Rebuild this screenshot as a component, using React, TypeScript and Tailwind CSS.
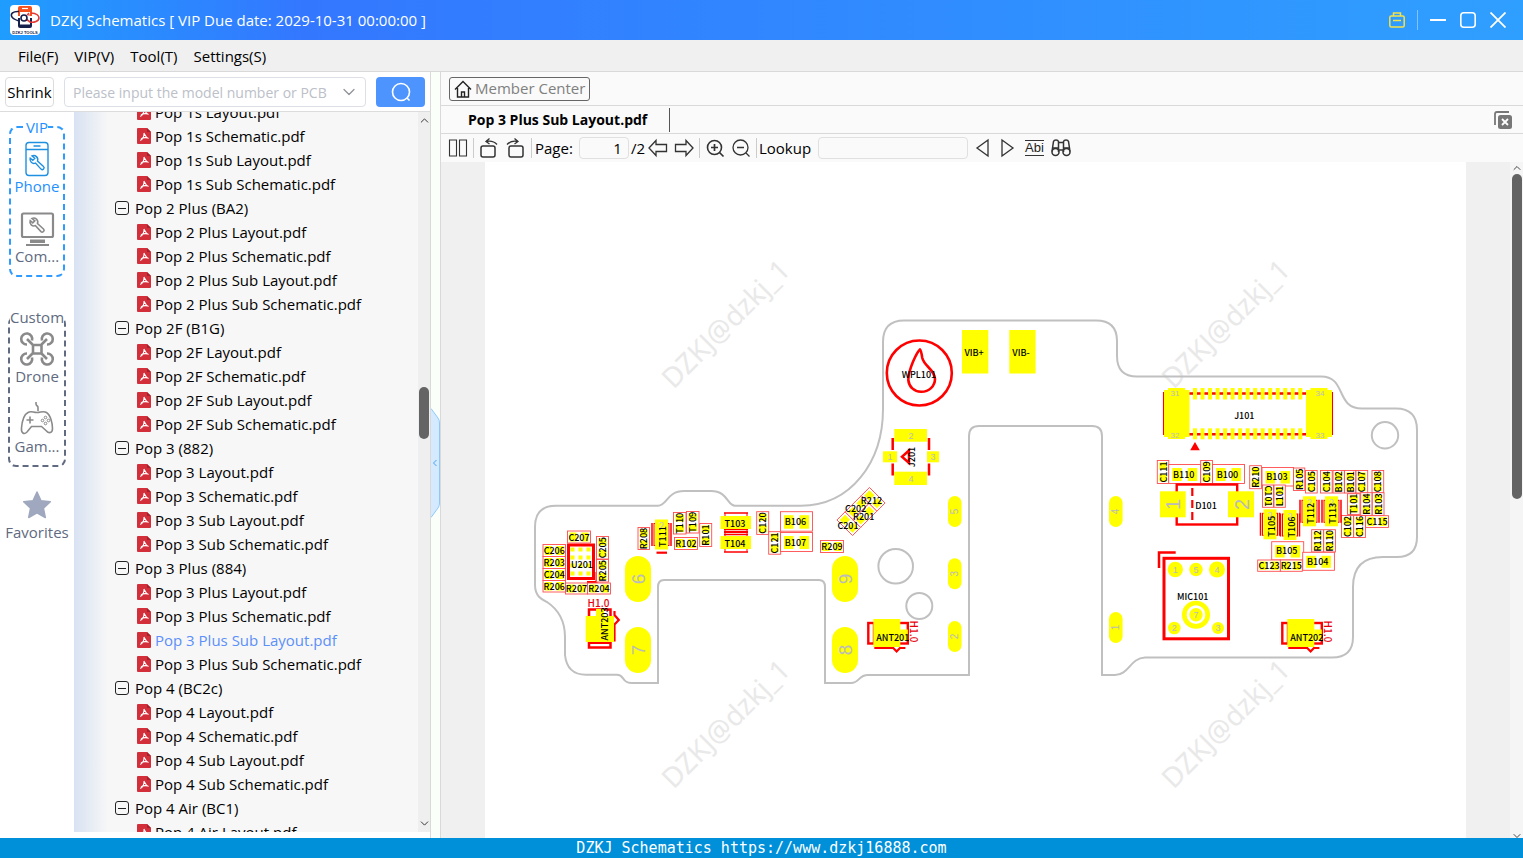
import React, { useState } from 'react';
import { ChevronDown, ChevronUp } from 'lucide-react';

type Group = { name: string; files: string[] };
type PartProps = { x: number; y: number; w: number; h: number; name: string; turn?: number };

const kinds = ['Layout', 'Schematic', 'Sub Layout', 'Sub Schematic'];

const groups: Group[] = [
  { name: 'Pop 2 Plus (BA2)', files: kinds.map((k) => `Pop 2 Plus ${k}.pdf`) },
  { name: 'Pop 2F (B1G)', files: kinds.map((k) => `Pop 2F ${k}.pdf`) },
  { name: 'Pop 3 (882)', files: kinds.map((k) => `Pop 3 ${k}.pdf`) },
  { name: 'Pop 3 Plus (884)', files: kinds.map((k) => `Pop 3 Plus ${k}.pdf`) },
  { name: 'Pop 4 (BC2c)', files: kinds.map((k) => `Pop 4 ${k}.pdf`) },
  { name: 'Pop 4 Air (BC1)', files: ['Pop 4 Air Layout.pdf'] },
];

// small two-pad parts: x, y, width, height, name, text rotation
const parts: [number, number, number, number, string, number?][] = [
  [567.5, 531, 23, 12, 'C207'],
  [543, 544.5, 22.5, 12, 'C206'],
  [543, 556.5, 22.5, 12, 'R203'],
  [543, 568.5, 22.5, 12, 'C204'],
  [543, 580.5, 22.5, 11.5, 'R206'],
  [596.5, 536.5, 12, 22.5, 'C205', -90],
  [596.5, 559.5, 12, 22.5, 'R205', -90],
  [565.5, 583, 22, 11, 'R207'],
  [587.5, 583, 23, 11, 'R204'],
  [638, 527.5, 11.5, 22, 'R208', -90],
  [673.5, 512.5, 12.5, 21.5, 'T110', -90],
  [686.5, 511.5, 12.5, 21.5, 'T109', -90],
  [674.5, 537.5, 23, 12, 'R102'],
  [699.7, 523.5, 12, 23, 'R101', -90],
  [756.7, 511.7, 12, 22.7, 'C120', -90],
  [768.7, 531.7, 12, 22.5, 'C121', -90],
  [780.5, 511.7, 32, 19.5, 'B106'],
  [780.5, 532.5, 32, 19, 'B107'],
  [820.5, 540.5, 23, 12, 'R209'],
  [1157.3, 460.5, 11.5, 23, 'C111', -90],
  [1168.7, 464.5, 32, 19, 'B110'],
  [1200.7, 460.5, 11.7, 23, 'C109', -90],
  [1212.5, 464.5, 32, 19, 'B100'],
  [1249.7, 465.7, 11.7, 23, 'R210', -90],
  [1262, 467.5, 31.5, 18.5, 'B103'],
  [1293.5, 468, 11.3, 22.5, 'R105', -90],
  [1305.5, 470.5, 11.7, 22.5, 'C105', -90],
  [1320.5, 470.5, 11.7, 22.5, 'C104', -90],
  [1333, 470.5, 11.3, 22.5, 'B102', -90],
  [1344.5, 470.5, 11.3, 22.5, 'B101', -90],
  [1356, 470.5, 11.7, 22.5, 'C107', -90],
  [1372, 470.5, 11.7, 22.5, 'C108', -90],
  [1262.5, 485, 11, 22.3, 'C101', 90],
  [1274, 485, 11.3, 22.3, 'L101', -90],
  [1347.5, 493.7, 12.5, 20.7, 'T101', -90],
  [1360.7, 492.7, 11.3, 22.7, 'R104', -90],
  [1372.3, 492.7, 11.7, 22.7, 'R103', -90],
  [1341.5, 515.5, 12, 22, 'C102', -90],
  [1353.7, 515.5, 11.7, 22, 'C116', -90],
  [1365.5, 515.7, 23, 11.7, 'C115'],
  [1311.7, 529.7, 11.7, 22.3, 'R112', -90],
  [1323.7, 529.7, 11.7, 22.3, 'R110', -90],
  [1271.7, 541.7, 32, 18.3, 'B105'],
  [1302.7, 552.3, 31.7, 18, 'B104'],
  [1257.7, 560, 22.7, 11.3, 'C123'],
  [1280.3, 560, 22, 11.3, 'R215'],
];

const diodes: [number, number, string][] = [
  [655, 519.5, 'T111'],
  [1263.5, 509.3, 'T105'],
  [1283.5, 510, 'T106'],
  [1303, 496.3, 'T112'],
  [1325, 496.3, 'T113'],
];

// spring contacts: x, y, width, height, pin
const contacts: [number, number, number, number, string][] = [
  [625, 556, 26, 46, '6'],
  [625, 627, 26, 46, '7'],
  [832, 556, 26, 46, '9'],
  [832, 627, 26, 46, '8'],
  [948, 496, 13.6, 31, '5'],
  [948, 558.3, 13.6, 31, '3'],
  [948, 621, 13.6, 31, '2'],
  [1109, 496, 13.6, 31, '4'],
  [1109, 612, 13.6, 31, '1'],
];

function Label({ x, y, turn = 0, className = 'fill-black text-[9px]', children }: { x: number; y: number; turn?: number; className?: string; children: React.ReactNode }) {
  return (
    <text
      textAnchor="middle"
      dominantBaseline="central"
      transform={`translate(${x} ${y}) rotate(${turn})`}
      className={className}
    >
      {children}
    </text>
  );
}

function Part({ x, y, w, h, name, turn = 0 }: PartProps) {
  const tall = h > w;
  const big = w > 30;
  const inset = big ? 3.5 : 2;
  const pad = big ? 9.5 : 7;
  return (
    <g>
      <rect x={x} y={y} width={w} height={h} fill="#fff" stroke="#ff4d4d" strokeWidth="0.9" />
      {tall ? (
        <>
          <rect x={x + 2} y={y + 2} width={w - 4} height={pad} fill="#ff0" />
          <rect x={x + 2} y={y + h - 2 - pad} width={w - 4} height={pad} fill="#ff0" />
        </>
      ) : (
        <>
          <rect x={x + inset} y={y + inset - (big ? 0 : 0.5)} width={pad} height={h - inset * 2 + 1} fill="#ff0" />
          <rect x={x + w - inset - pad} y={y + inset - (big ? 0 : 0.5)} width={pad} height={h - inset * 2 + 1} fill="#ff0" />
        </>
      )}
      <Label x={big ? x + 15 : x + w / 2} y={y + h / 2} turn={turn}>{name}</Label>
    </g>
  );
}

function Antenna({ x, name }: { x: number; name: string }) {
  return (
    <g transform={`translate(${x} 619)`}>
      <rect x="1" y="4" width="39.5" height="20.5" fill="#fff" stroke="red" strokeWidth="2.4" />
      <path d="M6.5 4v20" stroke="red" strokeWidth="2" />
      <rect x="6" y="0" width="27" height="28" fill="#ff0" />
      <rect x="33" y="10.5" width="7.5" height="11" fill="#ff0" />
      <path d="M7 29h19l3.3 3.5 3.3-3.5h5.5" fill="none" stroke="red" strokeWidth="2.2" />
      <Label x={25.5} y={18}>{name}</Label>
      <Label x={47} y={12.5} turn={90} className="fill-red-600 text-[10px]">H1.0</Label>
    </g>
  );
}

function Board() {
  return (
    <svg viewBox="485 162 981 676" preserveAspectRatio="xMidYMin meet" className="block w-full font-['Noto_Sans_CJK_SC','Liberation_Sans',sans-serif] font-medium">
      <g className="font-['Noto_Sans','Liberation_Sans',sans-serif] font-normal">
        {[[725, 323], [1225, 323], [725, 723], [1225, 723]].map(([x, y]) => (
          <Label key={`${x}-${y}`} x={x} y={y} turn={-45} className="fill-[#e9e9e9] text-[28px]">DZKJ@dzkj_1</Label>
        ))}
      </g>

      <path
        fill="none"
        stroke="#c0c0c0"
        strokeWidth="2"
        d="M658 683V587Q658 580 664 580H819Q825 580 825 587V683H851C860 683 858 675 868 675H969V436Q969 426 979 426H1092Q1102 426 1102 436V675H1115C1129 675 1130 658 1145 657.5H1332Q1353 657.5 1353 637V587Q1353 557 1383 557H1397Q1417 557 1417 537V430Q1417 408.500 1396 408.500H1362C1335 408.500 1347 376.500 1321 376.500H1137Q1117 376.500 1117 356V341Q1117 320.500 1096 320.500H904Q883 320.500 883 342V409C883 462 851 505.700 801 505.700H735C727 505.700 728 491 711 491H684C667 491 667 505.700 658 505.700H556Q535 505.700 535 527V585C535 597 543 600 547 602Q565 614 565 637V655Q567 674.700 586 674.700H617C625 674.700 621 683 632 683Z"
      />
      <g fill="none" stroke="#c0c0c0" strokeWidth="2">
        <circle cx="895.700" cy="566.300" r="17.300" />
        <circle cx="919.300" cy="606" r="13" />
        <circle cx="1385" cy="435.300" r="13.200" />
      </g>

      {contacts.map(([x, y, w, h, pin]) => (
        <g key={pin + x}>
          <rect x={x} y={y} width={w} height={h} rx={w / 2} fill="#ff0" />
          <Label x={x + w / 2} y={y + h / 2} turn={-90} className={w > 20 ? "fill-[#bbb] font-['Liberation_Sans'] font-normal text-[19px]" : "fill-[#bbb] font-['Liberation_Sans'] font-normal text-[10px]"}>{pin}</Label>
        </g>
      ))}

      <rect x="962" y="330" width="26.300" height="43.500" fill="#ff0" />
      <rect x="1009.300" y="330" width="26.300" height="43.500" fill="#ff0" />
      <Label x={974} y={352}>VIB+</Label>
      <Label x={1021} y={352}>VIB-</Label>

      <g fill="none" stroke="red" strokeWidth="2.600">
        <circle cx="919.300" cy="373" r="32.500" />
        <path d="M920 349.500C917 352 908.500 369 908.300 380C909 387 914 391.500 921 391.800C929 392 935 386 935 379C935 370 924 366 922.300 358Q921 350 920 349.500Z" />
      </g>
      <Label x={919} y={374}>WPL101</Label>

      {/* J201 */}
      <g fill="none" stroke="red" strokeWidth="2.500">
        <path d="M892.700 438v37.500M929 438v37.500" strokeDasharray="12 13.500" />
        <path d="M909 450.500l-7 6.200 7 6.200z" />
      </g>
      <g fill="#ff0">
        <rect x="894.300" y="429" width="32.700" height="12.700" />
        <rect x="894.300" y="471.700" width="32.700" height="13.300" />
        <rect x="883" y="451.300" width="14" height="11" />
        <rect x="927" y="451.300" width="12" height="11" />
      </g>
      {[['2', 911, 436], ['4', 911, 478.5], ['1', 890, 457], ['3', 933, 457]].map(([t, x, y]) => (
        <Label key={t} x={Number(x)} y={Number(y)} className="fill-[#bbb] font-['Liberation_Sans'] font-normal text-[9px]">{t}</Label>
      ))}
      <Label x={911.7} y={457} turn={-90}>J201</Label>

      {/* diagonal cluster */}
      <g transform="translate(861 511.500) rotate(-45)">
        <g fill="#fff" stroke="#ff4d4d" strokeWidth="0.900">
          <rect x="-23" y="-11" width="11.500" height="22" />
          <rect x="-11.500" y="-11" width="23" height="11" />
          <rect x="-11.500" y="0" width="23" height="11" />
          <rect x="11.500" y="-11" width="11.500" height="22" />
        </g>
        <g fill="#ff0">
          <rect x="-21" y="-9" width="7.500" height="7" />
          <rect x="-21" y="2" width="7.500" height="7" />
          <rect x="-9.500" y="-9" width="7" height="7" />
          <rect x="2.500" y="-9" width="7" height="7" />
          <rect x="-9.500" y="2" width="7" height="7" />
          <rect x="2.500" y="2" width="7" height="7" />
          <rect x="13.500" y="-9" width="7.500" height="7" />
          <rect x="13.500" y="2" width="7.500" height="7" />
        </g>
      </g>
      <Label x={871.5} y={500}>R212</Label>
      <Label x={855.7} y={508}>C202</Label>
      <Label x={863.7} y={516}>R201</Label>
      <Label x={848} y={525}>C201</Label>

      {/* U201 */}
      <rect x="568.500" y="545" width="25" height="33.500" fill="#fff" stroke="red" strokeWidth="3" />
      <path d="M596.500 572v10H587" fill="none" stroke="red" strokeWidth="2" />
      {[549, 557, 565, 573].map((y) =>
        [572, 580, 588].map((x) => <rect key={`${x}${y}`} x={x - 1.5} y={y - 1.5} width="4" height="4" fill="#ff0" />)
      )}
      <Label x={582} y={564.5}>U201</Label>

      {parts.map(([x, y, w, h, name, turn]) => (
        <Part key={name} x={x} y={y} w={w} h={h} name={name} turn={turn} />
      ))}

      {diodes.map(([x, y, name]) => (
        <g key={name}>
          <path d={`M${x - 3} ${y + 3.5}v23M${x + 16} ${y + 3.5}v23`} stroke="red" strokeWidth="1.500" />
          <rect x={x - 1} y={y + 4} width="15" height="22" fill="#fff" stroke="red" strokeWidth="1" />
          <rect x={x} y={y} width="13" height="30" fill="#ff0" />
          <Label x={x + 6.5} y={y + 6} className="fill-[#ccc] text-[9px]">2</Label>
          <Label x={x + 7.5} y={y + 17} turn={-90}>{name}</Label>
        </g>
      ))}
      <path d="M656.500 552.700h10.500" stroke="red" strokeWidth="2.200" />

      <g stroke="red" fill="none">
        <path d="M724 513h24M724 529.500h24M724 534.500h24M724 552h24" strokeWidth="1.500" />
        <path d="M724 532h24" strokeWidth="2" />
        <path d="M725 513v39M747 513v39" />
      </g>
      <rect x="720.500" y="516" width="30.500" height="13" fill="#ff0" />
      <rect x="720.500" y="536" width="30.500" height="13" fill="#ff0" />
      <Label x={735} y={523}>T103</Label>
      <Label x={735} y={543}>T104</Label>

      {/* ANT203 */}
      <rect x="589" y="609.500" width="21.500" height="38" fill="#fff" stroke="red" strokeWidth="2.500" />
      <path d="M589 643h21M614.500 611v4l4.300 5-4.300 4.500v17" fill="none" stroke="red" strokeWidth="2.200" />
      <rect x="585.700" y="616" width="28.300" height="26" fill="#ff0" />
      <rect x="596" y="609" width="8" height="8" fill="#ff0" />
      <Label x={604} y={624} turn={-90}>ANT203</Label>
      <Label x={598.5} y={602} className="fill-red-600 text-[10px]">H1.0</Label>

      <Antenna x={867.3} name="ANT201" />
      <Antenna x={1281.3} name="ANT202" />

      {/* J101 */}
      <path d="M1163.700 392v43M1332.300 392v43" stroke="red" strokeWidth="1.500" />
      <path d="M1189 393.500h117M1189 434.300h117" stroke="red" strokeWidth="2.600" />
      <g fill="#ff0">
        <path d="M1164 390h4v-2h17v2h4.500v47h-4.500v2h-17v-2h-4zM1306 390h4.500v-2h17v2h4.500v47h-4.500v2h-17v-2h-4.500z" />
        {Array.from({ length: 15 }, (_, i) => (
          <React.Fragment key={i}>
            <rect x={1193 + i * 7.52} y="388" width="4" height="11.500" />
            <rect x={1193 + i * 7.52} y="428.300" width="4" height="11" />
          </React.Fragment>
        ))}
      </g>
      {[['31', 1175, 393.5], ['32', 1175, 435], ['34', 1320, 393.5], ['33', 1320, 435]].map(([t, x, y]) => (
        <Label key={t} x={Number(x)} y={Number(y)} className="fill-[#bbb] font-['Liberation_Sans'] font-normal text-[8px]">{t}</Label>
      ))}
      <Label x={1244.3} y={415.7}>J101</Label>
      <path d="M1195 443.500l-3.500 6h7z" fill="red" stroke="red" strokeWidth="1.500" />

      {/* D101 */}
      <rect x="1176.700" y="484.500" width="60.500" height="40" fill="none" stroke="red" strokeWidth="2.400" />
      <path d="M1192.300 488v32.500" stroke="red" strokeWidth="2.200" strokeDasharray="8 4" />
      <rect x="1160" y="491.300" width="25.700" height="26" fill="#ff0" />
      <rect x="1228" y="491.300" width="26" height="26" fill="#ff0" />
      <Label x={1172.5} y={504.5} turn={-90} className="fill-[#bbb] font-['Liberation_Sans'] font-normal text-[20px]">1</Label>
      <Label x={1242} y={504.5} turn={-90} className="fill-[#bbb] font-['Liberation_Sans'] font-normal text-[20px]">2</Label>
      <Label x={1206} y={505}>D101</Label>

      {/* MIC101 */}
      <rect x="1164" y="558.300" width="64.500" height="80.500" fill="none" stroke="red" strokeWidth="3" />
      <path d="M1175.700 552.500H1159V568" fill="none" stroke="red" strokeWidth="2.500" />
      <circle cx="1196" cy="614.700" r="11.700" fill="#fff" stroke="#ff0" strokeWidth="4.700" />
      {[['1', 1175.3, 569.5, 7.7], ['5', 1196, 569.5, 6.7], ['4', 1217, 569.5, 8], ['7', 1196, 614.7, 6.7], ['2', 1174.3, 628, 6.3], ['3', 1218, 628, 6]].map(([t, x, y, r]) => (
        <g key={t}>
          <circle cx={x} cy={y} r={r} fill="#ff0" />
          <Label x={Number(x)} y={Number(y)} className="fill-[#bbb] font-['Liberation_Sans'] font-normal text-[9px]">{t}</Label>
        </g>
      ))}
      <Label x={1192.7} y={596.3}>MIC101</Label>
    </svg>
  );
}

function Logo() {
  return (
    <svg viewBox="0 0 30 30" className="size-[30px] shrink-0">
      <rect width="30" height="30" rx="4" fill="#fff" />
      <path d="M8 3q0-2 2-2h10q2 0 2 2v8H8z" fill="#f4511e" />
      <path d="M8 13h14v8q0 2-2 2H10q-2 0-2-2z" fill="#16204d" />
      <rect x="10" y="7" width="10" height="12.500" fill="#fff" />
      <path d="M12 3.500h6" stroke="#fff" strokeWidth="1.200" />
      <path d="M9 6.500C3 6 0 9 2 12c1 2 4 3 7 4" fill="none" stroke="#16204d" strokeWidth="1.600" />
      <path d="M21 8c6 0 8 3 8 5 0 3-5 5-9 4l-4-3" fill="none" stroke="#e53935" strokeWidth="1.600" />
      <circle cx="14" cy="13" r="3" fill="none" stroke="#16204d" strokeWidth="1.600" />
      <path d="M17 10l2-2M17 10h3" stroke="#e53935" strokeWidth="1.200" />
      <text x="15" y="28.500" textAnchor="middle" className="fill-[#16204d] font-['Liberation_Sans'] text-[4px] font-bold">DZKJ TOOLS</text>
    </svg>
  );
}

function PdfIcon() {
  return (
    <svg viewBox="0 0 14 16" className="h-4 w-[14px] shrink-0">
      <path d="M0 1q0-1 1-1h9l4 4v11q0 1-1 1H1q-1 0-1-1z" fill="#d32f3a" />
      <path d="M10 0v4h4z" fill="#a81f2a" />
      <path d="M7 5c1.500 3 2 4.500 4.500 5.500M7 5c.3 3-1.500 6-3.700 7.500M4 11c2-1.500 5-1.500 7-1" fill="none" stroke="#fff" strokeWidth="1.100" />
    </svg>
  );
}

const wrench = 'M14 19.500a4 4 0 0 1 5.500 5l6 5.500a1.800 1.800 0 0 1-2.500 2.600l-5.500-6a4 4 0 0 1-5.300-5l2.600 2.200 2-2z';

function PhoneIcon() {
  return (
    <svg viewBox="0 0 36 36" className="size-9" fill="none" stroke="#1f8fe0" strokeWidth="1.400">
      <rect x="7" y="1.500" width="22" height="33" rx="3" />
      <path d="M7 8.500h22M14.500 5h7" />
      <path d={wrench} transform="translate(-1 -4.500)" />
    </svg>
  );
}

function ComputerIcon() {
  return (
    <svg viewBox="0 0 36 36" className="size-9" fill="none" stroke="#8a8a8a" strokeWidth="2.200">
      <rect x="3" y="2.500" width="31" height="23.500" rx="1.500" />
      <path d="M12 31h13v-1.500h-13zM7 34h23" strokeWidth="2" />
      <path d={wrench} strokeWidth="1.600" transform="translate(-1 -12)" />
    </svg>
  );
}

function DroneIcon() {
  return (
    <svg viewBox="0 0 36 36" className="size-9" fill="none" stroke="#8a8a8a" strokeWidth="2.600">
      <path d="M14 14h8.500v8.500H14zM13.500 13.500L8 8M22.500 13.500L28 8M13.500 22.500L8 28M22.500 22.500L28 28" />
      <path d="M13 9.500A5.500 5.500 0 1 0 8 13.500M23 9.500a5.500 5.500 0 1 1 5 4M13 26.500a5.500 5.500 0 1 1-5-4M23 26.500a5.500 5.500 0 1 0 5-4" />
    </svg>
  );
}

function GameIcon() {
  return (
    <svg viewBox="0 0 36 36" className="size-9" fill="none" stroke="#8a8a8a" strokeWidth="1.600">
      <path d="M18 13V9.500c0-2-2-1.500-2-3.500V4" transform="translate(1 -3)" />
      <path d="M9 11.500c3-2 5 0 9 0s6-2 9.500 0c4 2.500 6 11 6 16 0 5-4 5-6 2.500l-5-4.500h-10L8 31c-3 3-6 1-5.500-4C3 21 5 13.500 9 11.500z" />
      <path d="M7.500 19h7M11 15.500v7" />
      <g strokeWidth="1">
        <circle cx="26.500" cy="16.500" r="1.300" />
        <circle cx="26.500" cy="22.500" r="1.300" />
        <circle cx="23.500" cy="19.500" r="1.300" />
        <circle cx="29.500" cy="19.500" r="1.300" />
      </g>
    </svg>
  );
}

function SideButton({ icon, label, active }: { icon: React.ReactNode; label: string; active?: boolean }) {
  return (
    <button className={`flex w-full flex-col items-center ${active ? 'text-[#1e90ff]' : 'text-[#606a80]'}`}>
      {icon}
      <span className="leading-[18px]">{label}</span>
    </button>
  );
}

function FileRow({ name, active, onPick }: { name: string; active: boolean; onPick: () => void }) {
  return (
    <li>
      <button onClick={onPick} className={`flex h-6 items-center gap-1 pl-[63px] whitespace-nowrap ${active ? 'text-[#5b8ff9]' : 'text-black'}`}>
        <PdfIcon />
        {name}
      </button>
    </li>
  );
}

function ToolButton({ label, children }: { label: string; children: React.ReactNode }) {
  return (
    <button aria-label={label} className="flex h-6 w-[26px] shrink-0 items-center justify-center">
      <svg viewBox="0 0 20 20" className="size-5 overflow-visible" fill="none" stroke="#333" strokeWidth="1.300">
        {children}
      </svg>
    </button>
  );
}

export default function App() {
  const [picked, setPicked] = useState('Pop 3 Plus Sub Layout.pdf');
  const [page, setPage] = useState('1');
  const [lookup, setLookup] = useState('');
  const topFiles = kinds.map((k) => `Pop 1s ${k}.pdf`);

  return (
    <div className="flex h-screen flex-col overflow-hidden bg-white font-['Open_Sans','Noto_Sans_CJK_SC',sans-serif] text-[15px] text-black">
      <header className="flex h-10 shrink-0 items-center bg-linear-to-r from-[#1f9dff] via-[#3377ff] via-20% to-[#2f9fff] pr-[17px] pl-[10px] text-white">
        <Logo />
        <h1 className="ml-[10px] whitespace-nowrap">DZKJ Schematics [ VIP Due date: 2029-10-31 00:00:00 ]</h1>
        <div className="ml-auto flex items-center">
          <button aria-label="Toolbox">
            <svg viewBox="0 0 16 16" className="size-4" fill="none" stroke="#f3e24a" strokeWidth="1.500">
              <rect x="0.800" y="4" width="14.400" height="11" rx="1.500" />
              <path d="M4.500 4V1h7v3M4 8.500h8" />
            </svg>
          </button>
          <span className="ml-3 h-5 w-px bg-white/40" />
          <button aria-label="Minimize" className="ml-3">
            <svg viewBox="0 0 16 16" className="size-4" stroke="#fff" strokeWidth="2"><path d="M0 8h16" /></svg>
          </button>
          <button aria-label="Maximize" className="ml-[14px]">
            <svg viewBox="0 0 16 16" className="size-4" fill="none" stroke="#fff" strokeWidth="1.600"><rect x="0.800" y="0.800" width="14.400" height="14.400" rx="3" /></svg>
          </button>
          <button aria-label="Close" className="ml-[14px]">
            <svg viewBox="0 0 16 16" className="size-4" stroke="#fff" strokeWidth="1.800"><path d="M0.500 0.500l15 15M15.500 0.500l-15 15" /></svg>
          </button>
        </div>
      </header>

      <nav className="flex h-8 shrink-0 items-center gap-4 border-b border-[#d9d9d9] bg-[#f0f0f0] pt-[2px] pl-[18px]">
        <button>File(F)</button>
        <button>VIP(V)</button>
        <button>Tool(T)</button>
        <button>Settings(S)</button>
      </nav>

      <main className="flex min-h-0 flex-1">
        <section className="flex w-[431px] shrink-0 flex-col border-r border-[#d9d9d9]">
          <div className="flex h-10 shrink-0 items-center border-b border-[#dcdcdc] px-[5px] pt-px">
            <button className="h-[30px] w-[49px] shrink-0 rounded-sm border border-[#dcdcdc] whitespace-nowrap">Shrink</button>
            <div className="ml-[10px] flex h-[30px] min-w-0 flex-1 items-center rounded-sm border border-[#dcdfe6] pr-[6px] pl-2">
              <input aria-label="Model number" placeholder="Please input the model number or PCB" className="min-w-0 flex-1 text-[14px] outline-none placeholder:text-[#bcc0c8]" />
              <ChevronDown size={20} strokeWidth={1.5} className="shrink-0 text-[#909399]" />
            </div>
            <button aria-label="Search" className="ml-[10px] flex h-[30px] w-[49px] shrink-0 items-center justify-center rounded-sm bg-[#4d94ff]">
              <svg viewBox="0 0 20 20" className="size-5" fill="none" stroke="#fff" strokeWidth="1.600">
                <circle cx="10" cy="10" r="8.500" />
                <path d="M16 16l2.500 2.500" />
              </svg>
            </button>
          </div>

          <div className="flex min-h-0 flex-1">
            <aside className="flex w-[74px] shrink-0 flex-col items-center pt-[3px]">
              <fieldset className="h-[162px] w-14 rounded-lg border-2 border-dashed border-[#2f9bff]">
                <legend className="mx-auto leading-6 text-[#1e90ff]">VIP</legend>
                <div className="flex flex-col gap-4 pt-[2px]">
                  <SideButton icon={<PhoneIcon />} label="Phone" active />
                  <SideButton icon={<ComputerIcon />} label="Com..." />
                </div>
              </fieldset>
              <fieldset className="mt-7 h-[162px] w-14 rounded-lg border-2 border-dashed border-[#606a80]">
                <legend className="mx-auto leading-6 text-[#606a80]">Custom</legend>
                <div className="flex flex-col gap-4 pt-[2px]">
                  <SideButton icon={<DroneIcon />} label="Drone" />
                  <SideButton icon={<GameIcon />} label="Gam..." />
                </div>
              </fieldset>
              <div className="mt-5">
                <SideButton
                  icon={
                    <svg viewBox="-2 -2 36 36" className="size-9" fill="#9fa8be" stroke="#9fa8be" strokeWidth="1.500" strokeLinejoin="round">
                      <path d="M16 3l4 8.700 9.300 1.100-6.900 6.400 1.900 9.300L16 23.900l-8.300 4.600 1.900-9.300-6.900-6.400 9.300-1.100z" />
                    </svg>
                  }
                  label="Favorites"
                />
              </div>
            </aside>

            <div className="mb-[6px] flex min-w-0 flex-1 bg-[#f7f7f7]">
              <div className="min-w-0 flex-1 overflow-hidden bg-linear-to-r from-[#d8e2f2] to-[#f7f7f7] to-10%">
                <ul className="-mt-3">
                  {topFiles.map((f) => (
                    <FileRow key={f} name={f} active={picked === f} onPick={() => setPicked(f)} />
                  ))}
                  {groups.map((g) => (
                    <li key={g.name}>
                      <button className="flex h-6 items-center gap-[6px] pl-[41px] whitespace-nowrap">
                        <svg viewBox="0 0 14 14" className="size-[14px] shrink-0" fill="none" stroke="#222">
                          <rect x="0.500" y="0.500" width="13" height="13" rx="2.500" />
                          <path d="M3 7.500h8" />
                        </svg>
                        {g.name}
                      </button>
                      <ul>
                        {g.files.map((f) => (
                          <FileRow key={f} name={f} active={picked === f} onPick={() => setPicked(f)} />
                        ))}
                      </ul>
                    </li>
                  ))}
                </ul>
              </div>
              <div className="flex w-3 shrink-0 flex-col items-center bg-[#efefef] py-[2px]">
                <ChevronUp size={13} strokeWidth={1.8} className="shrink-0 text-[#333]" />
                <div className="flex-[260]" />
                <div className="h-[52px] w-[10px] shrink-0 rounded-full bg-[#646464]" />
                <div className="flex-[379]" />
                <ChevronDown size={13} strokeWidth={1.8} className="shrink-0 text-[#333]" />
              </div>
            </div>
          </div>
        </section>

        <div className="flex w-[10px] shrink-0 items-center border-r border-[#d9d9d9] bg-[#fafff9]">
          <button aria-label="Collapse panel" className="mt-4">
            <svg viewBox="0 0 9 110" className="h-[110px] w-[9px]">
              <path d="M0 0.500L7 10Q8.500 12 8.500 15V95Q8.500 98 7 100L0 109.500" fill="#d6eaff" stroke="#8cc8ff" />
              <path d="M5.500 52L2.500 55l3 3" fill="none" stroke="#4aa3f0" />
            </svg>
          </button>
        </div>

        <section className="flex min-w-0 flex-1 flex-col bg-[#fafafa]">
          <div className="flex h-[34px] shrink-0 items-center border-b border-[#d9d9d9] pl-2">
            <button className="flex h-6 items-center gap-[3px] rounded-[3px] border border-[#666] px-1 text-[#808080]">
              <svg viewBox="0 0 18 18" className="size-[18px]" fill="none" stroke="#222" strokeWidth="1.400">
                <path d="M1 9.500L9 1.500l8 8M3.500 8v9h11V8M7.500 17v-5h3v5" />
              </svg>
              Member Center
            </button>
          </div>
          <div className="flex h-7 shrink-0 items-center border-b border-[#d9d9d9] pr-[11px]">
            <button className="h-6 border-r border-[#555] pr-[22px] pl-[27px] text-[14px] font-bold">Pop 3 Plus Sub Layout.pdf</button>
            <button aria-label="Close all" className="ml-auto">
              <svg viewBox="0 0 18 18" className="size-[18px]">
                <path d="M1 14V3q0-2 2-2h12" fill="none" stroke="#777" strokeWidth="1.800" />
                <rect x="4" y="4" width="14" height="14" rx="2.500" fill="#777" />
                <path d="M8 8l6 6M14 8l-6 6" stroke="#fff" strokeWidth="1.800" />
              </svg>
            </button>
          </div>

          <div className="flex h-7 shrink-0 items-center pl-1">
            <ToolButton label="Two pages"><path d="M1.500 2h7v16h-7zM11.500 2h7v16h-7z" strokeWidth="1.100" /></ToolButton>
            <span className="mx-[2px] h-5 w-px bg-[#ccc]" />
            <ToolButton label="Rotate left">
              <rect x="2" y="8" width="14" height="11" rx="2" strokeWidth="1.500" />
              <path d="M7 3.500q7-1.500 11 3M10.500 0.500L7 3.500l3.500 2.500" />
            </ToolButton>
            <ToolButton label="Rotate right">
              <rect x="4" y="8" width="14" height="11" rx="2" strokeWidth="1.500" />
              <path d="M13 3.500q-7-1.500-11 3M9.500 0.500L13 3.500 9.500 6" />
            </ToolButton>
            <span className="mx-[3px] h-5 w-px bg-[#ccc]" />
            <label htmlFor="page">Page:</label>
            <input id="page" value={page} onChange={(e) => setPage(e.target.value)} className="ml-[6px] h-[22px] w-[50px] rounded-sm border border-[#e0e0e0] px-[6px] text-right outline-none" />
            <span className="ml-[2px]">/2</span>
            <ToolButton label="Previous page"><path d="M1 10l7-7.500v4h10.500v7H8v4z" /></ToolButton>
            <ToolButton label="Next page"><path d="M19 10l-7-7.500v4H1.500v7H12v4z" /></ToolButton>
            <span className="mx-[2px] h-5 w-px bg-[#ccc]" />
            <ToolButton label="Zoom in">
              <circle cx="9.500" cy="9.500" r="7" strokeWidth="1.600" />
              <path d="M14.500 14.500l4 4M6 9.500h7M9.500 6v7" strokeWidth="1.700" />
            </ToolButton>
            <ToolButton label="Zoom out">
              <circle cx="9.500" cy="9.500" r="7.500" />
              <path d="M15 15l3.500 3.500M6 9.500h7" />
            </ToolButton>
            <span className="mx-[2px] h-5 w-px bg-[#ccc]" />
            <label htmlFor="lookup">Lookup</label>
            <input id="lookup" value={lookup} onChange={(e) => setLookup(e.target.value)} className="mr-px ml-[7px] h-[22px] w-[150px] rounded-sm border border-[#e0e0e0] px-2 outline-none" />
            <ToolButton label="Find previous"><path d="M16 2v16L5 10z" /></ToolButton>
            <ToolButton label="Find next"><path d="M4 2v16l11-8z" /></ToolButton>
            <button className="mx-1 h-4 border-y border-[#333] font-['Liberation_Sans',sans-serif] text-[13px] leading-[14px] text-[#222]">Abi</button>
            <ToolButton label="Find all">
              <circle cx="4.500" cy="14" r="3.500" strokeWidth="1.500" />
              <circle cx="15.500" cy="14" r="3.500" strokeWidth="1.500" />
              <path d="M1 13.500L2.500 3.500Q3 2 5 2t2.500 1.500V14M19 13.500L17.500 3.500Q17 2 15 2t-2.500 1.500V14M7.500 4.500h5M8 12h4M2 10h5M13 10h5" strokeWidth="1.500" />
            </ToolButton>
          </div>

          <div className="flex min-h-0 flex-1 bg-[#f0f0f0]">
            <div className="min-w-0 flex-1 overflow-hidden px-11">
              <div className="min-h-full bg-white">
                <Board />
              </div>
            </div>
            <div className="flex w-[13px] shrink-0 flex-col items-center bg-[#f5f5f5]">
              <ChevronUp size={12} strokeWidth={1.8} className="shrink-0 text-[#333]" />
              <div className="w-[10px] flex-[326] rounded-full bg-[#646464]" />
              <div className="flex-[333]" />
              <ChevronDown size={12} strokeWidth={1.8} className="-mb-1 shrink-0 text-[#333]" />
            </div>
          </div>
        </section>
      </main>

      <footer className="flex h-5 shrink-0 items-center justify-center bg-[#0090d9] font-['DejaVu_Sans_Mono',monospace] text-[15px] text-white">
        DZKJ Schematics https://www.dzkj16888.com
      </footer>
    </div>
  );
}
